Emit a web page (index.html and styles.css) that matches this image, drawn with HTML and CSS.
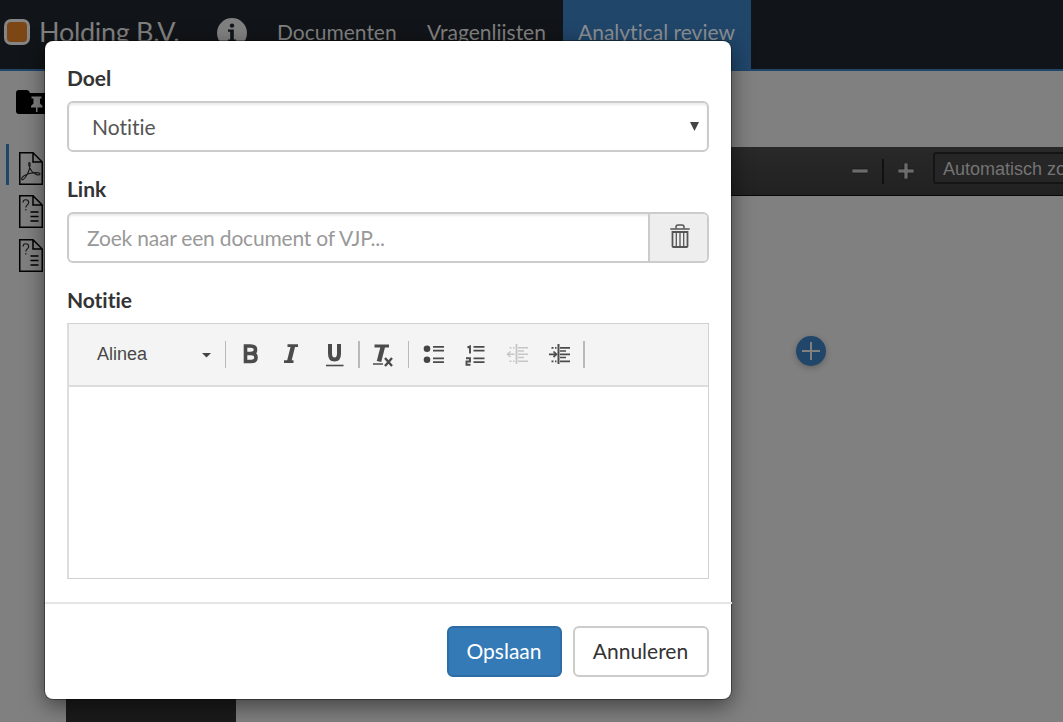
FILE: index.html
```html
<!DOCTYPE html>
<html lang="nl">
<head>
<meta charset="utf-8">
<title>Holding B.V. - Analytical review</title>
<link rel="stylesheet" href="styles.css">
</head>
<body>
<div class="page">
  <header class="topbar">
    <span class="swatch"></span>
    <span class="brand">Holding B.V.</span>
    <svg class="info" viewBox="0 0 30 30"><circle cx="15" cy="15" r="15" fill="#808080"/><circle cx="15" cy="7.600" r="2.200" fill="#111418"/><path d="M11 11.500h5.800v10H19v2.300h-8v-2.300h2.200v-7.700H11z" fill="#111418"/></svg>
    <nav class="nav">
      <a class="tab tab-docs">Documenten</a>
      <a class="tab tab-lists">Vragenlijsten</a>
      <a class="tab tab-active">Analytical review</a>
    </nav>
  </header>
  <div class="body">
    <aside class="rail">
      <svg class="folder" viewBox="0 0 34 24"><path d="M0 3Q0 0 3 0h8q2 0 3 3h17q3 0 3 3v15q0 3-3 3H3q-3 0-3-3z" fill="#000"/><path d="M15.500 6.500h10v2H24v5l2.500 2.500v1.500h-5v4.500h-1.500v-4.500h-5V16l2.500-2.500v-5h-2z" fill="#808080"/></svg>
      <div class="files">
        <div class="file file-current"><svg viewBox="0 0 24 33"><path d="M.75.75H14L23.250 10v22.250H.75zM14 .75V10h9.250" class="line"/><path d="M2.500 27c1.500 2.500 6-3.500 7.600-9 1-4 1.500-7.500.3-7.500-1.500 0-.4 5.500 2.600 9 2.500 3 7.500 4.500 8 2.600.4-2-6-1.700-10.500-.6C7 22.300 2.300 25 2.500 27z" class="thin"/></svg></div>
        <div class="file"><svg viewBox="0 0 24 33"><path d="M.75.75H14L23.250 10v22.250H.75zM14 .75V10h9.250M11.500 17h8M11.500 21.500h8M11.500 26h8" class="line"/><path d="M4 7.500Q4 4.700 6.800 4.700t2.900 2.700c0 2.400-2.900 2.500-2.900 5.100M6.800 14v1.500" class="thin"/></svg></div>
        <div class="file"><svg viewBox="0 0 24 33"><path d="M.75.75H14L23.250 10v22.250H.75zM14 .75V10h9.250M11.500 17h8M11.500 21.500h8M11.500 26h8" class="line"/><path d="M4 7.500Q4 4.700 6.800 4.700t2.900 2.700c0 2.400-2.900 2.500-2.900 5.100M6.800 14v1.500" class="thin"/></svg></div>
      </div>
    </aside>
    <main class="viewer">
      <div class="viewer-bar">
        <svg class="zoom-icon" viewBox="0 0 16 16"><path d="M0 6h16v4H0z" fill="#6b6b6b" stroke="#191919" stroke-width=".7"/></svg>
        <span class="zoom-split"></span>
        <svg class="zoom-icon" viewBox="0 0 16 16"><path d="M6 0h4v6h6v4h-6v6H6v-6H0V6h6z" fill="#6b6b6b" stroke="#191919" stroke-width=".7"/></svg>
        <span class="zoom-select">Automatisch zoomen</span>
      </div>
      <div class="viewer-content">
        <div class="thumbs"></div>
        <div class="canvas"><span class="add"><svg viewBox="0 0 30 30"><path d="M15 6v18M6 15h18" stroke="#808080" stroke-width="2"/></svg></span></div>
      </div>
    </main>
  </div>
</div>

<section class="modal">
  <div class="modal-body">
    <div class="group">
      <div class="label">Doel</div>
      <div class="field select"><span>Notitie</span><svg class="arrow" viewBox="0 0 9 9"><path d="M0 0h9L4.500 9z" fill="#444"/></svg></div>
    </div>
    <div class="group">
      <div class="label">Link</div>
      <div class="field link"><span class="placeholder">Zoek naar een document of VJP...</span>
        <span class="trash"><svg viewBox="0 0 20 24"><g fill="none" stroke="#555"><path d="M.3 5h19.400" stroke-width="1.500"/><path d="M6 4.500V3Q6 1 8 1h4q2 0 2 2v1.500" stroke-width="1.500"/><path d="M2.500 8h15v14.200q0 .8-.8.8H3.300q-.8 0-.8-.8z" stroke-width="1.800"/><path d="M6.300 8v15M10 8v15M13.700 8v15" stroke-width="1.300"/></g></svg></span>
      </div>
    </div>
    <div class="group">
      <div class="label">Notitie</div>
      <div class="editor">
        <div class="toolbar">
          <span class="format">Alinea</span>
          <svg class="tools" viewBox="0 0 500 40">
            <path d="M3 18h9l-4.500 4.500z" fill="#444"/>
            <g fill="#b9b9b9"><path d="M26 6h1v27h-1zM159 6h2v27h-2zM209 6h1v27h-1zM384 6h2v27h-2z"/></g>
            <g transform="translate(0 -1)">
            <g fill="none" stroke="#4b4b4b">
              <path d="M46.500 12h5q5 0 5 3.700t-5 3.800h-5 5.500q5 0 5 4t-5 4h-5.500z" stroke-width="3.600"/>
              <path d="M88.500 11.700h10.500M85 27.700h9.500" stroke-width="2.800"/><path d="M94 12l-4 16" stroke-width="4.400"/>
              <path d="M131 10v9.500q0 6 4.500 6t4.500-6V10" stroke-width="4"/><path d="M127 31.500h17.500" stroke-width="1.600"/>
              <path d="M175.500 12h14.500" stroke-width="3"/><path d="M184 12l-4 15.500" stroke-width="4.600"/><path d="M174 30h10" stroke-width="1.500"/><path d="M186 24l7 8M193 24l-7 8" stroke-width="2.400"/>
              <path d="M234 12.800h11M234 16.600h11M234 24.400h11M234 28.200h11M274.500 12.800h11M274.500 16.600h11M274.500 24.400h11M274.500 28.200h11" stroke-width="1.700"/>
              <path d="M268.500 13.500l2.500-1v7M267 24.300h4v3.200h-3.500v3.200h4" stroke-width="1.900"/>
            </g>
            <circle cx="228" cy="14.700" r="3.300" fill="#444"/><circle cx="228" cy="25.700" r="3.300" fill="#444"/>
            <g fill="none" stroke="#c6c6c6" stroke-width="1.500"><path d="M317.500 10v20" stroke-width="1.800"/><path d="M319 13.800h10M319 17h6M319 20.300h10M319 23.500h6M319 27.300h10M309 20.300h6.500"/><path d="M310.500 13.800h5M310.500 27.300h5" stroke-dasharray="2 1.500"/><path d="M311.500 17.500l-3 2.800 3 2.700"/></g>
            <g fill="none" stroke="#4b4b4b" stroke-width="1.700"><path d="M359.500 10v20" stroke-width="2"/><path d="M361 13.800h10M361 17h6M361 20.300h10M361 23.500h6M361 27.300h10M350 20.300h6.500"/><path d="M352.500 13.800h5M352.500 27.300h5" stroke-dasharray="2 1.500"/><path d="M354.500 17.500l3 2.800-3 2.700"/></g>
            </g>
          </svg>
        </div>
        <div class="editor-area"></div>
      </div>
    </div>
  </div>
  <footer class="modal-footer">
    <button class="btn btn-primary">Opslaan</button>
    <button class="btn btn-default">Annuleren</button>
  </footer>
</section>
</body>
</html>
```
FILE: styles.css
```css
* { box-sizing: border-box; }
body { margin: 0; width: 1063px; height: 722px; overflow: hidden; background: #808080; font-family: Lato, sans-serif; font-size: 21px; font-variant-ligatures: none; color: #333; position: relative; }
svg { display: block; }
.page { height: 722px; display: flex; flex-direction: column; }
.topbar { height: 71px; flex: none; display: flex; background: #111418; border-bottom: 2px solid #20466a; color: #808080; }
.swatch { width: 26px; height: 26px; margin: 19px 0 0 4px; border: 3px solid #858585; border-radius: 7px; background: #7c4714; flex: none; }
.brand { width: 178px; padding-left: 9px; font-size: 27px; letter-spacing: -.3px; line-height: 32px; padding-top: 16px; white-space: nowrap; }
.info { width: 30px; height: 30px; margin: 18px 0 0 9px; flex: none; }
.nav { display: flex; margin-left: 15px; height: 69px; }
.tab { padding: 17px 15px 0; line-height: 30px; white-space: nowrap; height: 71px; }
.tab-docs { width: 150px; }
.tab-lists { width: 151px; }
.tab-active { width: 188px; background: #20466a; color: #8b8f93; }
.body { flex: 1; display: flex; min-height: 0; }
.rail { width: 66px; flex: none; }
.folder { width: 34px; height: 24px; margin: 19px 0 0 16px; }
.files { margin-top: 30px; padding-left: 6px; }
.file { height: 43.500px; padding: 7px 0 0 13px; }
.file-current { height: 41px; margin-bottom: 3px; border-left: 3px solid #20466a; padding: 8px 0 0 10px; }
.file svg { width: 24px; height: 33px; }
.line { fill: none; stroke: #000; stroke-width: 1.5; }
.thin { fill: none; stroke: #161616; stroke-width: 1.1; }
.viewer { flex: 1; min-width: 0; margin-top: 76px; display: flex; flex-direction: column; }
.viewer-bar { height: 49px; flex: none; display: flex; align-items: center; padding-left: 786px; background: linear-gradient(#292929, #212121); border-bottom: 1px solid #080808; overflow: hidden; }
.zoom-icon { width: 16px; height: 16px; flex: none; }
.zoom-split { width: 2px; height: 25px; background: #111; margin: 0 14px; flex: none; }
.zoom-select { height: 32px; width: 200px; flex: none; margin: -6px 0 0 19px; padding-left: 8px; border: 2px solid #151515; border-radius: 3px; background: #262626; font: 18px/30px "Liberation Sans", sans-serif; color: #747474; }
.viewer-content { flex: 1; display: flex; }
.thumbs { width: 170px; background: #1b1b1b; }
.canvas { flex: 1; padding: 140px 0 0 560px; }
.add { display: block; width: 30px; height: 30px; border-radius: 50%; background: #20466a; box-shadow: 0 2px 6px rgba(0,0,0,.25); }

.modal { position: absolute; left: 45px; top: 41px; width: 686px; height: 658px; background: #fff; border-radius: 8px; box-shadow: 0 0 0 1px rgba(0,0,0,.35), 0 7px 22px rgba(0,0,0,.5); }
.modal-body { padding: 22px 22px 23px; display: flex; flex-direction: column; gap: 22px; }
.label { height: 30px; line-height: 30px; margin-bottom: 8px; font-weight: 700; letter-spacing: -.05px; }
.field { height: 51px; border: 2px solid #ccc; border-radius: 6px; box-shadow: inset 0 2px 2px rgba(0,0,0,.075); display: flex; line-height: 48px; color: #555; justify-content: space-between; }
.select { padding: 0 8px 0 23px; }
.arrow { width: 9px; height: 9px; margin-top: 19px; }
.placeholder { padding-left: 18px; color: #999; letter-spacing: -.2px; }
.trash { width: 59px; height: 47px; border-left: 2px solid #ccc; border-radius: 0 4px 4px 0; background: #eee; padding: 10px 0 0 20px; }
.trash svg { width: 20px; height: 24px; }
.editor { height: 256px; border: 1px solid #d1d1d1; border-left: 2px solid #ddd; display: flex; flex-direction: column; }
.toolbar { height: 63px; flex: none; background: #f4f4f4; border-bottom: 2px solid #ddd; display: flex; }
.format { width: 130px; padding-left: 28px; font: 18px/61px "Liberation Sans", sans-serif; color: #484848; }
.tools { width: 500px; height: 40px; margin-top: 11px; flex: none; }
.modal-footer { border-top: 2px solid #e5e5e5; width: 687px; padding: 22px 23px 22px 0; display: flex; justify-content: flex-end; gap: 11px; }
.btn { height: 51px; border-radius: 6px; font: 21px/30px Lato, sans-serif; font-variant-ligatures: none; padding: 0 1px 2px 0; border: 2px solid; }
.btn-primary { width: 115px; background: #337ab7; border-color: #2e6da4; color: #fff; }
.btn-default { width: 136px; background: #fff; border-color: #ccc; color: #333; }
```
